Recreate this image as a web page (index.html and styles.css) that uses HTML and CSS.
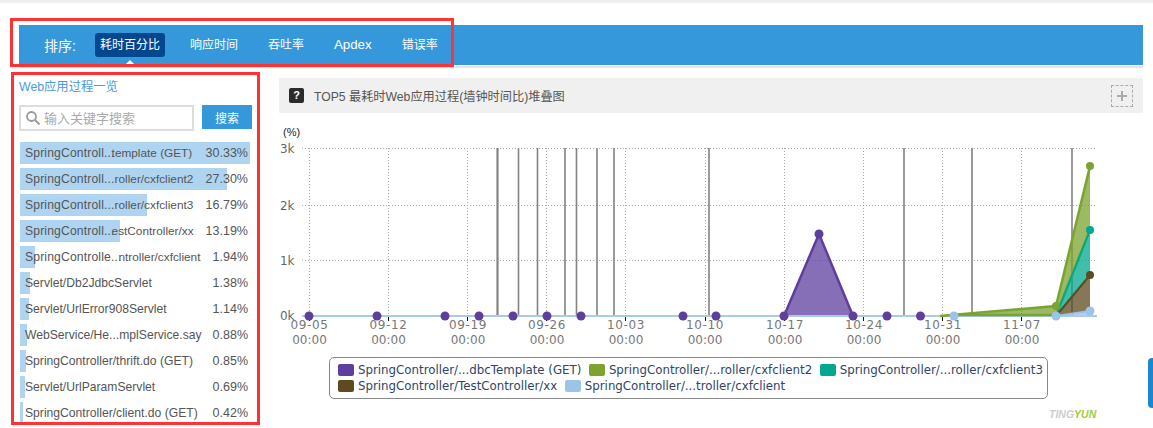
FILE: index.html
```html
<!DOCTYPE html>
<html lang="zh-CN">
<head>
<meta charset="utf-8">
<title>Web应用过程一览</title>
<link rel="stylesheet" href="styles.css">
</head>
<body>
<div class="topbar"></div>
<div class="page">
  <nav class="nav">
    <span class="nav-label">排序:</span>
    <a class="nav-item active">耗时百分比</a>
    <a class="nav-item">响应时间</a>
    <a class="nav-item">吞吐率</a>
    <a class="nav-item nav-latin">Apdex</a>
    <a class="nav-item">错误率</a>
  </nav>
  <div class="nav-rule"></div>
  <div class="content">
    <aside class="side">
      <h2 class="side-title">Web应用过程一览</h2>
      <div class="search">
        <div class="search-box">
          <svg class="search-icon" width="16" height="16" viewBox="0 0 16 16"><circle cx="6.5" cy="6.5" r="4.5"/><path d="M10 10l4.5 4.5"/></svg>
          <span class="placeholder">输入关键字搜索</span>
        </div>
        <button class="search-btn">搜索</button>
      </div>
      <ul class="list">
        <li class="row"><i class="bar" style="width:230px"></i><span class="name"><span class="head">SpringControll...</span><span class="tail tight">template (GET)</span></span><span class="pct">30.33%</span></li>
        <li class="row"><i class="bar" style="width:207px"></i><span class="name"><span class="head">SpringControll...</span><span class="tail">roller/cxfclient2</span></span><span class="pct">27.30%</span></li>
        <li class="row"><i class="bar" style="width:127px"></i><span class="name"><span class="head">SpringControll...</span><span class="tail">roller/cxfclient3</span></span><span class="pct">16.79%</span></li>
        <li class="row"><i class="bar" style="width:100px"></i><span class="name"><span class="head">SpringControll...</span><span class="tail tight">estController/xx</span></span><span class="pct">13.19%</span></li>
        <li class="row"><i class="bar" style="width:15px"></i><span class="name"><span class="head">SpringControlle...</span><span class="tail tight">ntroller/cxfclient</span></span><span class="pct">1.94%</span></li>
        <li class="row"><i class="bar" style="width:10px"></i><span class="name">Servlet/Db2JdbcServlet</span><span class="pct">1.38%</span></li>
        <li class="row"><i class="bar" style="width:9px"></i><span class="name">Servlet/UrlError908Servlet</span><span class="pct">1.14%</span></li>
        <li class="row"><i class="bar" style="width:7px"></i><span class="name">WebService/He...mplService.say</span><span class="pct">0.88%</span></li>
        <li class="row"><i class="bar" style="width:6px"></i><span class="name">SpringController/thrift.do (GET)</span><span class="pct">0.85%</span></li>
        <li class="row"><i class="bar" style="width:5px"></i><span class="name">Servlet/UrlParamServlet</span><span class="pct">0.69%</span></li>
        <li class="row"><i class="bar" style="width:3px"></i><span class="name">SpringController/client.do (GET)</span><span class="pct">0.42%</span></li>
      </ul>
    </aside>
    <main class="main">
      <header class="chart-head">
        <span class="help">?</span>
        <span class="chart-title">TOP5 最耗时Web应用过程(墙钟时间比)堆叠图</span>
        <span class="expand"><svg width="10" height="10" viewBox="0 0 10 10"><path d="M5 0v10M0 5h10"/></svg></span>
      </header>
      <svg class="chart" width="864" height="244" viewBox="279 113 864 244">
        <text class="unit" x="283" y="136">(%)</text>
        <g class="grid">
          <path d="M302 148.5H1097M302 205.5H1097M302 260.5H1097"/>
          <path d="M309.500 148V316M388.500 148V316M467.500 148V316M546.500 148V316M625.500 148V316M705.500 148V316M784.500 148V316M863.500 148V316M942.500 148V316M1021.500 148V316"/>
        </g>
        <g class="spikes">
          <path class="thick" d="M497.500 148V316"/>
          <path d="M518.500 148V316M537.500 148V316M565 148V316M576.500 148V316M597 148V316M614 148V316M709 148V316M904 148V316M972 148V316M1072 148V316"/>
        </g>
        <g class="ylabels">
          <text x="294.500" y="153">3k</text>
          <text x="294.500" y="210">2k</text>
          <text x="294.500" y="265">1k</text>
          <text x="294.500" y="320">0k</text>
        </g>
        <path class="ticks" d="M309.500 316v5M388.500 316v5M467.500 316v5M546.500 316v5M625.500 316v5M705.500 316v5M784.500 316v5M863.500 316v5M942.500 316v5M1021.500 316v5"/>
        <polygon class="a-purple" points="784,316 819,234 853,316"/>
        <polygon class="a-green" points="954,316 1056,306 1090,166 1090,230 1056,316"/>
        <polygon class="a-teal" points="1056,316 1090,230 1090,275"/>
        <polygon class="a-brown" points="1056,316 1090,275 1090,311"/>
        <polygon class="a-blue" points="1056,316 1090,311 1090,316"/>
        <path class="baseline" d="M302 316H1097"/>
        <polyline class="l-green" points="940,316 1056,306 1090,166"/>
        <polyline class="l-green" points="954,315 1056,315 1090,230"/>
        <polyline class="l-teal" points="1056,316 1090,230"/>
        <polyline class="l-brown" points="1056,316 1090,275"/>
        <polyline class="l-blue" points="1056,316 1090,311"/>
        <polyline class="l-purple" points="784,316 819,234 853,316"/>
        <g class="d-purple">
          <circle cx="309" cy="316" r="4.500"/><circle cx="377" cy="316" r="4.500"/><circle cx="445" cy="316" r="4.500"/><circle cx="479" cy="316" r="4.500"/><circle cx="513" cy="316" r="4.500"/><circle cx="547" cy="316" r="4.500"/><circle cx="581" cy="316" r="4.500"/><circle cx="683" cy="316" r="4.500"/><circle cx="716" cy="316" r="4.500"/><circle cx="784" cy="316" r="4.500"/><circle cx="819" cy="234" r="4.500"/><circle cx="853" cy="316" r="4.500"/><circle cx="887" cy="316" r="4.500"/><circle cx="920.500" cy="316" r="4.500"/>
        </g>
        <g class="d-green"><circle cx="1056" cy="306" r="4"/><circle cx="1090" cy="166" r="4"/></g>
        <circle class="d-teal" cx="1090" cy="230" r="4"/>
        <circle class="d-brown" cx="1090" cy="275" r="4"/>
        <g class="d-blue"><circle cx="954" cy="316" r="4.500"/><circle cx="1056" cy="316" r="4.500"/><circle cx="1090" cy="311" r="4.500"/></g>
        <g class="xlabels">
          <text class="date" x="309.500" y="329">09-05</text><text x="309.500" y="344">00:00</text>
          <text class="date" x="388.500" y="329">09-12</text><text x="388.500" y="344">00:00</text>
          <text class="date" x="468" y="329">09-19</text><text x="468" y="344">00:00</text>
          <text class="date" x="547" y="329">09-26</text><text x="547" y="344">00:00</text>
          <text class="date" x="626" y="329">10-03</text><text x="626" y="344">00:00</text>
          <text class="date" x="705" y="329">10-10</text><text x="705" y="344">00:00</text>
          <text class="date" x="785" y="329">10-17</text><text x="785" y="344">00:00</text>
          <text class="date" x="864" y="329">10-24</text><text x="864" y="344">00:00</text>
          <text class="date" x="943" y="329">10-31</text><text x="943" y="344">00:00</text>
          <text class="date" x="1022" y="329">11-07</text><text x="1022" y="344">00:00</text>
        </g>
      </svg>
      <div class="legend">
        <span class="item"><i class="sw s-purple"></i>SpringController/...dbcTemplate (GET)</span>
        <span class="item"><i class="sw s-green"></i>SpringController/...roller/cxfclient2</span>
        <span class="item"><i class="sw s-teal"></i>SpringController/...roller/cxfclient3</span>
        <span class="item"><i class="sw s-brown"></i>SpringController/TestController/xx</span>
        <span class="item"><i class="sw s-blue"></i>SpringController/...troller/cxfclient</span>
      </div>
      <div class="brand">TING<b>YUN</b></div>
    </main>
  </div>
</div>
<div class="annot annot-nav"></div>
<div class="annot annot-side"></div>
<div class="edge-tab"></div>
</body>
</html>
```
FILE: styles.css
```css
* { box-sizing: border-box; }
html, body { margin: 0; padding: 0; }
body {
  width: 1153px;
  height: 428px;
  overflow: hidden;
  position: relative;
  background: #fff;
  font-family: "Liberation Sans", "Noto Sans CJK SC", sans-serif;
  font-size: 12px;
  color: #555;
}
.topbar { height: 3px; background: #eee; }
.page { padding: 22px 10px 0 19px; }

.nav {
  height: 40px;
  background: #3498db;
  display: flex;
  align-items: center;
  gap: 20px;
  padding-left: 25px;
  position: relative;
  color: #fff;
}
.nav::after {
  content: "";
  position: absolute;
  left: 106px;
  bottom: 0;
  border: 5px solid transparent;
  border-top-width: 0;
  border-bottom-color: #fff;
}
.nav-label { font-size: 14px; margin-right: -1px; }
.nav-item { padding: 0 5px; line-height: 24px; height: 24px; border-radius: 3px; font-size: 12px; }
.nav-latin { font-size: 13.300px; }
.nav-item.active { background: #03478f; }
.nav-rule { height: 2px; margin-top: 1px; background: #e4e4e4; }

.content { display: flex; }
.side { width: 233px; margin-top: 10px; flex: none; }
.side-title { margin: 0; font-size: 12.300px; font-weight: normal; line-height: 18px; color: #4a9be0; }
.search { display: flex; gap: 8px; margin-top: 9px; }
.search-box {
  width: 175px;
  height: 26px;
  border: 2px solid #ddd;
  display: flex;
  align-items: center;
  padding-left: 4px;
  gap: 3px;
}
.search-icon { fill: none; stroke: #999; stroke-width: 1.800; flex: none; }
.placeholder { color: #aaa; font-size: 13px; margin-bottom: 2px; }
.search-btn {
  width: 50px;
  height: 24px;
  border: 0;
  padding: 0;
  background: #3498db;
  color: #fff;
  font: inherit;
}
.list { list-style: none; margin: 11px 0 0 1px; padding: 0; width: 230px; }
.row {
  height: 22px;
  margin-bottom: 4px;
  position: relative;
  display: flex;
  align-items: center;
  justify-content: space-between;
  padding: 0 2px 0 5px;
  color: #555;
}
.bar { position: absolute; left: 0; top: 0; bottom: 0; background: #aed4f2; }
.name, .pct { position: relative; white-space: nowrap; }
.name { font-size: 12.150px; }
.pct { font-size: 12.500px; }
.head { letter-spacing: .15px; }
.tail { font-size: 11.800px; }
.tail.tight { margin-left: -3px; }

.main { width: 864px; margin-left: 27px; margin-top: 10px; flex: none; }
.chart-head {
  height: 35px;
  background: #f0f0f0;
  display: flex;
  align-items: center;
  padding: 0 10px;
}
.help {
  width: 15px;
  height: 15px;
  background: #2b2b2b;
  border-radius: 2px;
  color: #fff;
  font-weight: bold;
  font-size: 11px;
  line-height: 15px;
  text-align: center;
}
.chart-title { margin-left: 10px; flex: 1; font-size: 12.200px; color: #555; }
.expand {
  width: 22px;
  height: 22px;
  border: 1px dashed #aaa;
  display: flex;
  align-items: center;
  justify-content: center;
}
.expand svg { stroke: #aaa; stroke-width: 2; fill: none; }

.chart { display: block; font-family: "DejaVu Sans", sans-serif; }
.unit { font-size: 11px; fill: #222; font-family: "Liberation Sans", sans-serif; }
.grid path { stroke: #aaa; stroke-width: 1; stroke-dasharray: 1 2; fill: none; }
.spikes path { stroke: #828282; stroke-width: 1.600; fill: none; }
.spikes .thick { stroke-width: 2.200; }
.ticks { stroke: #111; stroke-width: 1; fill: none; }
.baseline { stroke: #a9cbea; stroke-width: 2; fill: none; }
.ylabels text { font-size: 12px; fill: #666; text-anchor: end; }
.xlabels text { font-size: 12px; fill: #777; text-anchor: middle; }
.xlabels .date { letter-spacing: .6px; }
.a-purple { fill: #5e3f9e; opacity: .75; }
.a-green { fill: #7aa32f; opacity: .75; }
.a-teal { fill: #00a88e; opacity: .75; }
.a-brown { fill: #5e4a20; opacity: .75; }
.a-blue { fill: #9cc3e8; opacity: .75; }
.l-purple, .l-green, .l-teal, .l-brown, .l-blue { fill: none; stroke-width: 2; }
.l-purple { stroke: #5e3f9e; stroke-width: 2.500; }
.l-green { stroke: #7aa32f; stroke-width: 2.500; }
.l-teal { stroke: #00a88e; }
.l-brown { stroke: #5e4a20; }
.l-blue { stroke: #9cc3e8; }
.d-purple { fill: #5e3f9e; }
.d-green { fill: #7aa32f; }
.d-teal { fill: #00a88e; }
.d-brown { fill: #5e4a20; }
.d-blue { fill: #9cc3e8; }

.legend {
  width: 719px;
  height: 42px;
  margin-left: 50px;
  border: 1px solid #888;
  border-radius: 5px;
  padding: 4px 0 4px 8px;
  display: flex;
  flex-wrap: wrap;
  gap: 0 7.500px;
  font-family: "DejaVu Sans", sans-serif;
  font-size: 11.800px;
  color: #2f4468;
}
.item { display: flex; align-items: center; height: 16px; white-space: nowrap; }
.sw { width: 16px; height: 12px; border-radius: 2px; margin-right: 4px; flex: none; }
.s-purple { background: #5e3f9e; }
.s-green { background: #7aa32f; }
.s-teal { background: #00a88e; }
.s-brown { background: #5e4a20; }
.s-blue { background: #9cc3e8; }
.brand {
  margin: 9px 0 0 770px;
  font-size: 10.500px;
  line-height: 12px;
  font-style: italic;
  font-weight: bold;
  color: #ccc;
}
.brand b { color: #9ccc3c; }

.annot { position: absolute; border: 3px solid #f33; pointer-events: none; }
.annot-nav { left: 10px; top: 18px; width: 444px; height: 49px; }
.annot-side { left: 11px; top: 72px; width: 249px; height: 353px; }
.edge-tab {
  position: absolute;
  left: 1148px;
  top: 358px;
  width: 5px;
  height: 50px;
  background: #1a88d0;
  border-radius: 4px 0 0 4px;
}
```
